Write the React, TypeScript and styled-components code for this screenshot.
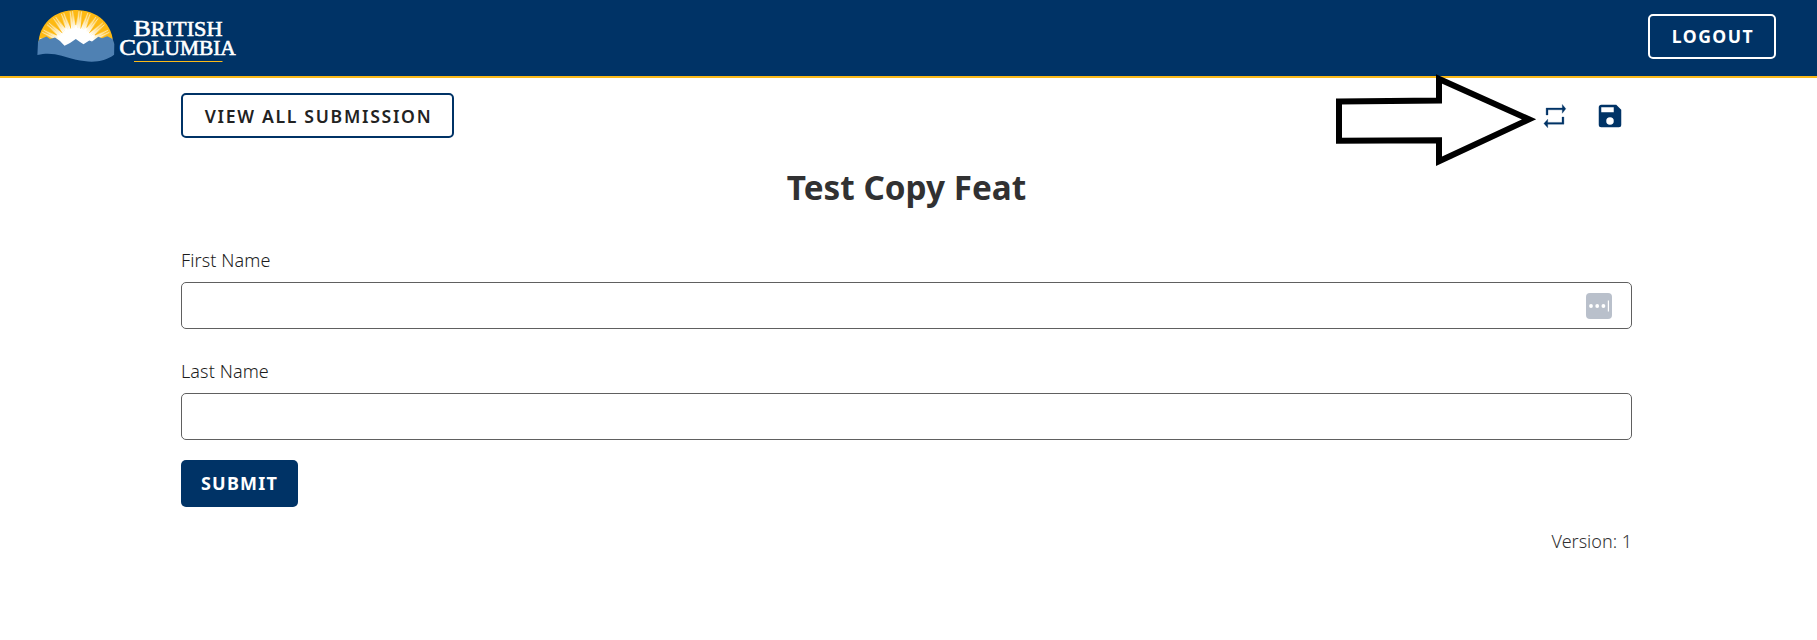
import React from 'react';
import styled, { createGlobalStyle } from 'styled-components';

const Global = createGlobalStyle`
  * { box-sizing: border-box; }
  body { margin: 0; background: #fff; font-family: "Noto Sans", "Open Sans", sans-serif; color: #313132; }
  button, input { font-family: inherit; }
`;
const Header = styled.header`
  height: 78px;
  background: #003366;
  border-bottom: 2px solid #fcba19;
  display: flex;
  justify-content: space-between;
  align-items: flex-start;
  padding: 8px 41px 0 36px;
`;
const LogoSvg = styled.svg`
  display: block;
  width: 204px;
  height: 58px;
`;
const OutlineButton = styled.button<{ $light?: boolean; $width: number }>`
  width: ${p => p.$width}px;
  height: 45px;
  margin-top: ${p => (p.$light ? 6 : 0)}px;
  padding: ${p => (p.$light ? '0 0 1px 2px' : '1px 0 0 2px')};
  border: 2px solid ${p => (p.$light ? '#fff' : '#003366')};
  border-radius: 5px;
  background: transparent;
  color: ${p => (p.$light ? '#fff' : '#222')};
  font-size: 17.6px;
  font-weight: ${p => (p.$light ? 700 : 600)};
  letter-spacing: ${p => (p.$light ? 1.5 : 1.7)}px;
  white-space: nowrap;
`;
const Main = styled.main`
  width: 1451px;
  margin: 0 0 0 181px;
  padding-top: 15px;
`;
const Toolbar = styled.div`
  position: relative;
  display: flex;
  justify-content: space-between;
  align-items: center;
  height: 45px;
`;
const Actions = styled.div`
  display: flex;
  gap: 25px;
  padding-right: 7px;
`;
const Icon = styled.svg`
  display: block;
  width: 30px;
  height: 30px;
  fill: #003366;
`;
const Arrow = styled.svg`
  position: absolute;
  left: 1149px;
  top: -23px;
  width: 212px;
  height: 100px;
`;
const Title = styled.h1`
  margin: 25px 0 0;
  height: 48px;
  line-height: 48px;
  font-size: 33.3px;
  font-weight: 700;
  text-align: center;
`;
const Form = styled.form`
  padding-top: 35px;
`;
const Field = styled.div`
  height: 111px;
`;
const Label = styled.label`
  display: block;
  height: 36px;
  line-height: 28px;
  font-size: 18px;
  font-weight: 300;
  letter-spacing: 0.1px;
  color: #1c1c1c;
`;
const InputBox = styled.div`
  height: 47px;
  border: 1px solid #606060;
  border-radius: 5px;
  display: flex;
  align-items: center;
  padding: 0 19px 0 12px;
`;
const Input = styled.input`
  flex: 1;
  border: 0;
  outline: 0;
  background: transparent;
  font-size: 18px;
`;
const Submit = styled.button`
  display: block;
  width: 117px;
  height: 47px;
  margin-top: -8px;
  padding: 0 0 1px;
  border: 0;
  border-radius: 5px;
  background: #003366;
  color: #fff;
  font-size: 18px;
  font-weight: 700;
  letter-spacing: 1.2px;
`;
const Version = styled.div`
  margin-top: 20px;
  line-height: 28px;
  font-size: 18px;
  font-weight: 300;
  text-align: right;
`;

const at = (deg: number, rad: number) => {
  const a = (deg * Math.PI) / 180;
  return `${(75.8 + Math.cos(a) * rad).toFixed(2)},${(48 + Math.sin(a) * rad).toFixed(2)}`;
};
const beams = Array.from({ length: 13 }, (_, i) => {
  const d = 186 + i * 14;
  return `${at(d - 3.6, 38)} ${at(d + 3.6, 38)} ${at(d + 0.8, i % 2 ? 20 : 23)} ${at(d - 0.8, i % 2 ? 20 : 23)}`;
});
const glints = Array.from({ length: 12 }, (_, i) => 193 + i * 14).flatMap(d => [d - 2, d + 2]);

function Logo() {
  return (
    <LogoSvg viewBox="36 8 204 58" role="img" aria-label="British Columbia">
      <defs>
        <radialGradient id="glow" gradientUnits="userSpaceOnUse" cx="75.8" cy="48" r="38">
          <stop offset=".55" stopColor="#fff" />
          <stop offset=".85" stopColor="#fff" stopOpacity=".2" />
          <stop offset="1" stopColor="#fff" stopOpacity="0" />
        </radialGradient>
        <clipPath id="sun"><path d="M38.3 46C38.3 24 54 10 75.8 10S113.3 24 113.3 46Z" /></clipPath>
      </defs>
      <g clipPath="url(#sun)">
        <rect x="36" y="8" width="80" height="40" fill="#fdb913" />
        <rect x="36" y="8" width="80" height="40" fill="url(#glow)" />
        {glints.map(d => <polyline key={d} points={`${at(d, 20)} ${at(d, 37)}`} stroke="#fff2cc" strokeWidth=".7" fill="none" />)}
        {beams.map(b => <polygon key={b} points={b} fill="#fdb913" />)}
      </g>
      <path d="M37.4 55L38 42L39.6 39.5L46.5 36.5L50 39L55 37.5L60 41L64.5 45.7L70 43L75.8 39L80 42L83.5 44.2L89.3 40.5L92 41.5L98.3 36.7L102 38.2L107.3 36.3L112.7 39L114.3 44L114.1 54.8C104 62.5 91 63 76 59.8C62 56.3 53 51.5 37.4 55Z" fill="#4f81b3" />
      <g fill="#fff" stroke="#fff" strokeWidth=".6" fontFamily="'Liberation Serif', serif">
        <text x="133.5" y="35.5" fontSize="24" textLength="89" lengthAdjust="spacingAndGlyphs">B<tspan fontSize="20.5">RITISH</tspan></text>
        <text x="119.3" y="55.3" fontSize="24" textLength="116.5" lengthAdjust="spacingAndGlyphs">C<tspan fontSize="20.5">OLUMBIA</tspan></text>
      </g>
      <path d="M134 61.5H222.5" stroke="#fcba19" strokeWidth="1" />
    </LogoSvg>
  );
}

export default function App() {
  return (
    <>
      <Global />
      <Header>
        <Logo />
        <OutlineButton $light $width={128}>LOGOUT</OutlineButton>
      </Header>
      <Main>
        <Toolbar>
          <OutlineButton $width={273}>VIEW ALL SUBMISSION</OutlineButton>
          <Actions>
            <Icon viewBox="0 0 30 30"><path stroke="#003366" strokeWidth=".3" d="M6.1 14V7H22.3V3.4L25.8 7.8L22.3 12.3V8.8H8V14ZM23.9 16V23.2H7.7V26.8L3.9 22.5L7.7 18.2V21.4H22V16Z" /></Icon>
            <Icon viewBox="0 0 24 24"><path d="M15 9H5V5H15M12 19A3 3 0 1 1 12 13A3 3 0 0 1 12 19M17 3H5C3.89 3 3 3.89 3 5V19A2 2 0 0 0 5 21H19A2 2 0 0 0 21 19V7L17 3Z" /></Icon>
          </Actions>
          <Arrow viewBox="1330 70 212 100">
            <path d="M1339 101.5L1439 100.5V79L1529 119.3L1439 161.3V140.3L1339 140.7Z" fill="none" stroke="#000" strokeWidth="6" />
          </Arrow>
        </Toolbar>
        <Title>Test Copy Feat</Title>
        <Form onSubmit={e => e.preventDefault()}>
          <Field>
            <Label htmlFor="first">First Name</Label>
            <InputBox>
              <Input id="first" />
              <svg width="26" height="26" viewBox="0 0 26 26">
                <rect width="26" height="26" rx="4" fill="#b9c0cb" />
                <g fill="#fff"><circle cx="5" cy="13" r="1.9" /><circle cx="11.2" cy="13" r="1.9" /><circle cx="17.4" cy="13" r="1.9" /><rect x="21.8" y="7.5" width="1.2" height="11" /></g>
              </svg>
            </InputBox>
          </Field>
          <Field>
            <Label htmlFor="last">Last Name</Label>
            <InputBox><Input id="last" /></InputBox>
          </Field>
          <Submit type="submit">SUBMIT</Submit>
        </Form>
        <Version>Version: 1</Version>
      </Main>
    </>
  );
}
